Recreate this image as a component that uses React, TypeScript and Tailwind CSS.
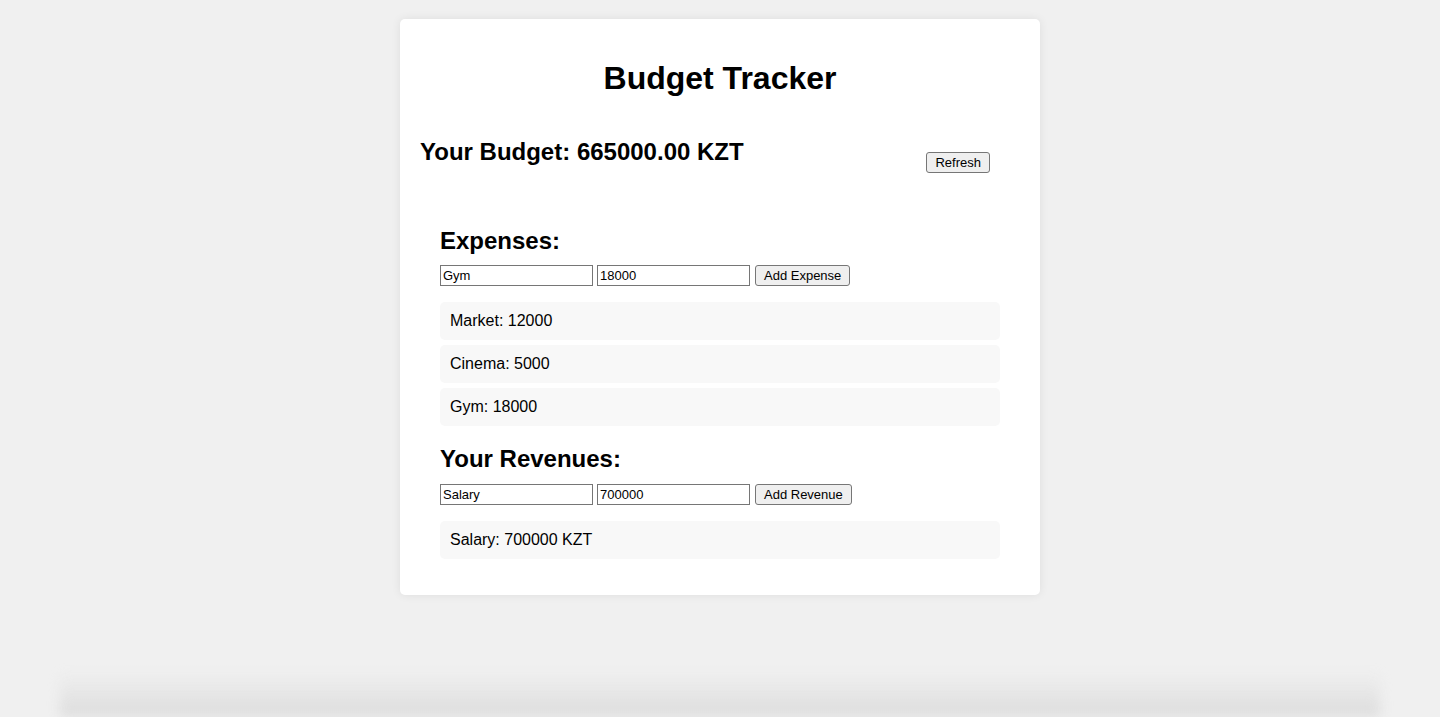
import React, { useState } from 'react';

interface Entry {
  name: string;
  amount: number;
}

const inputCls =
  'w-[153px] h-[21px] border border-[#767676] bg-white px-[2px] text-[13px] leading-[17px] text-black outline-none';
const buttonCls =
  'h-[21px] border border-[#767676] rounded-[3px] bg-[#efefef] px-[8px] text-[13px] leading-[17px] text-black';

function EntryForm({ name, amount, label }: { name: string; amount: string; label: string }) {
  const [n, setN] = useState(name);
  const [a, setA] = useState(amount);
  return (
    <div className="flex items-center">
      <input className={inputCls} value={n} onChange={(e) => setN(e.target.value)} />
      <input className={`${inputCls} ml-1`} value={a} onChange={(e) => setA(e.target.value)} />
      <button className={`${buttonCls} ml-[5px]`}>{label}</button>
    </div>
  );
}

function EntryList({ items, suffix }: { items: Entry[]; suffix?: string }) {
  return (
    <ul className="mt-4 flex flex-col gap-[5px]">
      {items.map((it) => (
        <li
          key={it.name}
          className="h-[38px] flex items-center px-[10px] bg-[#f8f8f8] rounded-[5px] text-[16px]"
        >
          {it.name}: {it.amount}
          {suffix ? ` ${suffix}` : ''}
        </li>
      ))}
    </ul>
  );
}

export default function App() {
  const expenses: Entry[] = [
    { name: 'Market', amount: 12000 },
    { name: 'Cinema', amount: 5000 },
    { name: 'Gym', amount: 18000 },
  ];
  const revenues: Entry[] = [{ name: 'Salary', amount: 700000 }];

  const total =
    revenues.reduce((s, r) => s + r.amount, 0) - expenses.reduce((s, e) => s + e.amount, 0);

  return (
    <div className="relative min-h-screen bg-[#f0f0f0] pt-[19px] font-['Liberation_Sans',Arial,sans-serif] text-black overflow-hidden">
      <div className="mx-auto w-[640px] bg-white rounded-[5px] shadow-[0_0_10px_rgba(0,0,0,0.08)] px-5 pt-[41px] pb-9">
        <h1 className="text-center text-[32px] leading-[37px] font-bold">Budget Tracker</h1>

        <div className="flex justify-between items-start mt-[41px]">
          <h2 className="text-[24px] leading-[28px] font-bold">Your Budget: {total.toFixed(2)} KZT</h2>
          <button className={`${buttonCls} mt-[14px] mr-[30px] h-[20px]`}>Refresh</button>
        </div>

        <section className="px-5 mt-[54px]">
          <h2 className="text-[24px] leading-[28px] font-bold">Expenses:</h2>
          <div className="mt-[10px]">
            <EntryForm name="Gym" amount="18000" label="Add Expense" />
          </div>
          <EntryList items={expenses} />

          <h2 className="mt-[19px] text-[24px] leading-[28px] font-bold">Your Revenues:</h2>
          <div className="mt-[11px]">
            <EntryForm name="Salary" amount="700000" label="Add Revenue" />
          </div>
          <EntryList items={revenues} suffix="KZT" />
        </section>
      </div>

      <div className="pointer-events-none absolute bottom-0 left-[60px] right-[60px] h-[45px] bg-gradient-to-b from-transparent to-[#dcdcdc] blur-[6px]" />
    </div>
  );
}
